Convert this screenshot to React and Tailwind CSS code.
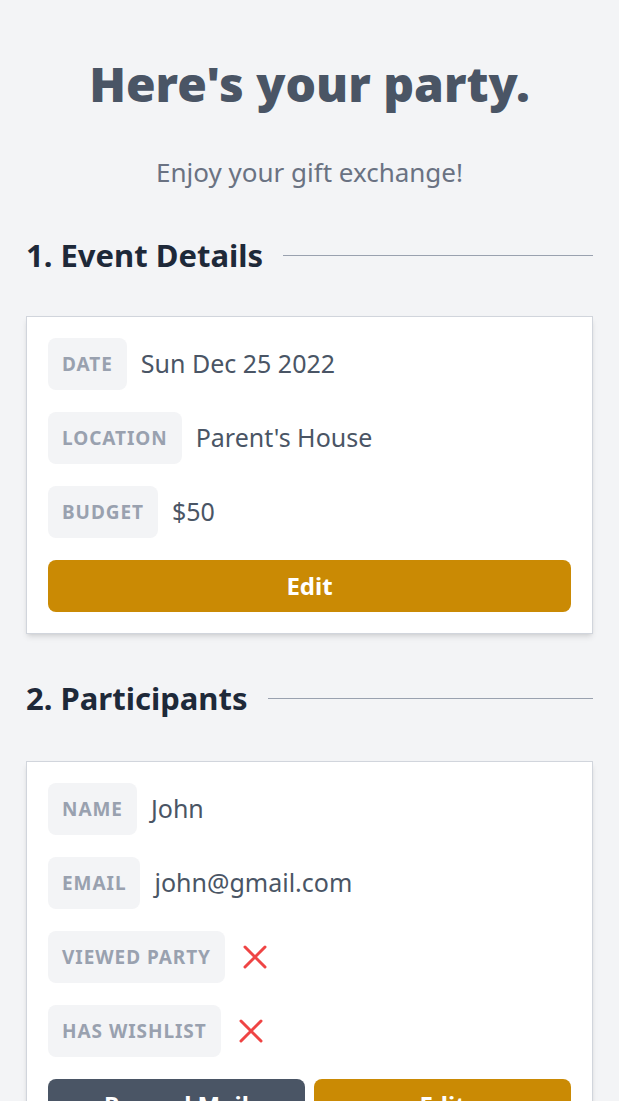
import React from 'react';

const XMark = () => (
  <svg width="32" height="32" viewBox="0 0 32 32" className="shrink-0">
    <path d="M6 6 L26 26 M26 6 L6 26" stroke="#ef4444" strokeWidth="3" strokeLinecap="round" fill="none" />
  </svg>
);

const Field = ({ label, children }) => (
  <div className="flex items-center gap-3.5">
    <div className="rounded-lg bg-gray-100 px-3.5 py-3 text-[19px] font-bold uppercase leading-7 tracking-wider text-gray-400">
      {label}
    </div>
    <div className="text-[25px] text-gray-600">{children}</div>
  </div>
);

const SectionTitle = ({ children }) => (
  <div className="flex items-center gap-5">
    <h2 className="shrink-0 text-[31px] font-bold leading-9 text-gray-800">{children}</h2>
    <div className="h-px flex-1 bg-gray-400" />
  </div>
);

const Card = ({ children }) => (
  <div className="flex flex-col gap-[22px] border border-gray-300 bg-white p-[21px] shadow-md">
    {children}
  </div>
);

export default function App() {
  const participants = [
    { name: 'John', email: 'john@gmail.com', viewed: false, wishlist: false },
  ];

  return (
    <div
      className="min-h-screen bg-gray-100 px-[26px] pt-[60px] pb-10"
      style={{ fontFamily: '"Noto Sans", "Open Sans", sans-serif' }}
    >
      <h1 className="text-center text-5xl font-black leading-none text-gray-600">
        Here's your party.
      </h1>
      <p className="mt-12 text-center text-[26px] leading-8 text-gray-500">
        Enjoy your gift exchange!
      </p>

      <div className="mt-[49px]">
        <SectionTitle>1. Event Details</SectionTitle>
      </div>
      <div className="mt-[43px]">
        <Card>
          <Field label="Date">Sun Dec 25 2022</Field>
          <Field label="Location">Parent's House</Field>
          <Field label="Budget">$50</Field>
          <button className="w-full rounded-lg bg-[#ca8a04] py-2.5 text-2xl font-bold leading-8 text-white">
            Edit
          </button>
        </Card>
      </div>

      <div className="mt-[46px]">
        <SectionTitle>2. Participants</SectionTitle>
      </div>
      {participants.map((p) => (
        <div key={p.email} className="mt-[45px]">
          <Card>
            <Field label="Name">{p.name}</Field>
            <Field label="Email">{p.email}</Field>
            <Field label="Viewed Party">{p.viewed ? '✓' : <XMark />}</Field>
            <Field label="Has Wishlist">{p.wishlist ? '✓' : <XMark />}</Field>
            <div className="flex gap-[9px]">
              <button className="flex-1 rounded-lg bg-gray-600 py-2.5 text-2xl font-bold leading-8 text-white">
                Resend Mail
              </button>
              <button className="flex-1 rounded-lg bg-[#ca8a04] py-2.5 text-2xl font-bold leading-8 text-white">
                Edit
              </button>
            </div>
          </Card>
        </div>
      ))}
    </div>
  );
}
